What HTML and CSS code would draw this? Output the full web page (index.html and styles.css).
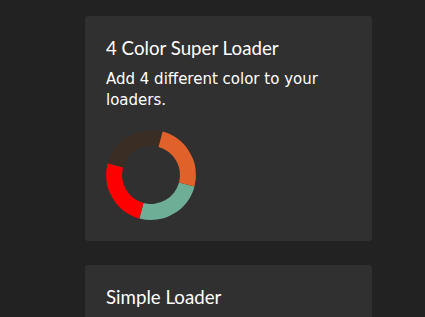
FILE: index.html
```html
<!DOCTYPE html>
<html>
<head>
<meta charset="utf-8">
<link rel="stylesheet" href="styles.css">
</head>
<body>
<main class="list">
  <section class="card">
    <h2 class="card-title">4 Color Super Loader</h2>
    <p class="card-text">Add 4 different color to your loaders.</p>
    <div class="loader"></div>
  </section>
  <section class="card">
    <h2 class="card-title">Simple Loader</h2>
  </section>
</main>
</body>
</html>
```
FILE: styles.css
```css
html, body {
  margin: 0;
  padding: 0;
  background: #222222;
  height: 100%;
  overflow: hidden;
}
.list {
  display: flex;
  flex-direction: column;
  gap: 24px;
  padding: 16px 0 0 85px;
  width: 287px;
}
.card {
  background: #303030;
  border-radius: 3px;
  padding: 20px 21px 22px;
  height: 225px;
  box-sizing: border-box;
}
.card-title {
  margin: 0;
  font-family: Lato, "Open Sans", sans-serif;
  font-weight: 400;
  font-size: 18.7px;
  line-height: 24px;
  color: #ffffff;
}
.card-text {
  margin: 9px 0 0;
  font-family: "DejaVu Sans", Verdana, sans-serif;
  font-size: 15px;
  line-height: 21px;
  color: #ffffff;
}
.loader {
  margin-top: 19px;
  width: 90px;
  height: 90px;
  box-sizing: border-box;
  border-radius: 50%;
  border: 16px solid;
  border-top-color: #3a2e24;
  border-right-color: #e0622a;
  border-bottom-color: #6fae96;
  border-left-color: #ff0000;
  transform: rotate(-30deg);
}
```
